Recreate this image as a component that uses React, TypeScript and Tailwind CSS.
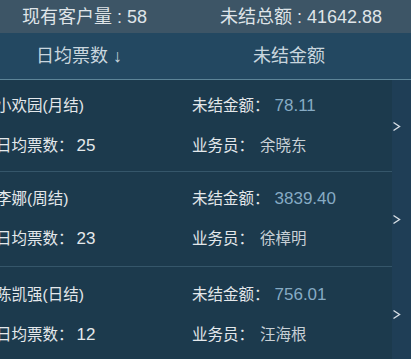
import React from "react";

const rows = [
  { name: "小欢园(月结)", daily: "25", amount: "78.11", rep: "余晓东", h: "h-[92px]" },
  { name: "李娜(周结)", daily: "23", amount: "3839.40", rep: "徐樟明", h: "h-[95px]" },
  { name: "陈凯强(日结)", daily: "12", amount: "756.01", rep: "汪海根", h: "h-[95px]" },
];

const font = { fontFamily: '"Liberation Sans", "Noto Sans CJK SC", sans-serif' };

export default function App() {
  return (
    <div className="w-[411px] h-[359px] overflow-hidden bg-[#1c3a4d]" style={font}>
      <div className="h-[33px] bg-[#3d5566] flex items-center text-[18px] text-[#dfe4e8] leading-none">
        <div className="w-[220px] pl-[22px]">现有客户量 : 58</div>
        <div>未结总额 : 41642.88</div>
      </div>
      <div className="h-[47px] bg-[#234861] border-b border-[#5d8598] flex items-center text-[18px] text-[#c9d6de] leading-none">
        <div className="w-[253px] pl-[36px]">日均票数 ↓</div>
        <div>未结金额</div>
      </div>
      {rows.map((r, i) => (
        <div key={i} className={`flex ${r.h}`}>
          <div className={`flex-1 flex ${i < 2 ? "border-b border-[#35566a]" : ""}`}>
            <div className="w-[196px] ml-[-4px] flex flex-col justify-center gap-[20px] text-[15.5px] leading-[20px] text-[#e4e8eb]">
              <div>{r.name}</div>
              <div>
                日均票数：<span className="ml-[3px] text-[17px]">{r.daily}</span>
              </div>
            </div>
            <div className="flex-1 flex flex-col justify-center gap-[20px] text-[15.5px] leading-[20px] text-[#e4e8eb]">
              <div>
                未结金额：<span className="ml-[5px] text-[17px] text-[#86abc4]">{r.amount}</span>
              </div>
              <div>
                业务员：<span className="ml-[6px] text-[#c8d0d6]">{r.rep}</span>
              </div>
            </div>
          </div>
          <div className="w-[19px] bg-[#1f3e56] flex items-center">
            <svg width="9" height="11" viewBox="0 0 9 11">
              <path d="M1.5 1.5 L7.5 5.5 L1.5 9.5" fill="none" stroke="#d6dde3" strokeWidth="1.4" />
            </svg>
          </div>
        </div>
      ))}
    </div>
  );
}
